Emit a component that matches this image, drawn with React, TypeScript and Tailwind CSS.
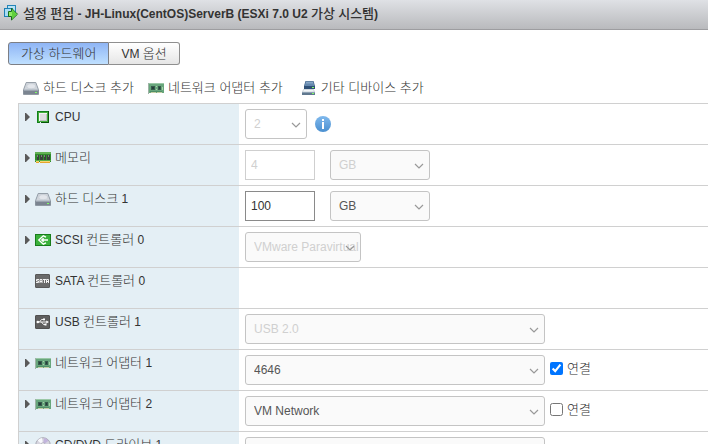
import { Fragment } from 'react';
import type { ReactNode } from 'react';

type MixedTextProps = {
    text: string;
    hangulClass?: string;
};

// Hangul is set one size larger than the latin text around it
const MixedText = ({ text, hangulClass = 'font-light' }: MixedTextProps) => (
    <>
        {text.split(/([가-힣]+)/).map((part, i) =>
            i % 2 ? (
                <span key={i} className={`text-[13px] ${hangulClass}`}>
                    {part}
                </span>
            ) : (
                <Fragment key={i}>{part}</Fragment>
            ),
        )}
    </>
);

type IconProps = {
    children: ReactNode;
};

const Icon = ({ children }: IconProps) => (
    <svg viewBox="0 0 16 16" className="size-4 shrink-0" aria-hidden="true">
        {children}
    </svg>
);

const EditIcon = () => (
    <Icon>
        <rect x="4.5" y="0.5" width="8" height="9" fill="#b9e2f5" stroke="#2484b8" />
        <rect x="1.5" y="3.5" width="8" height="8" fill="#a9dcf3" stroke="#1f7fb4" />
        <path d="M5.5 6.5h3V3.2l6 6-6 5.8v-3.5h-3z" fill="#8bea62" stroke="#176b1b" />
        <path d="M9 4.5l4.6 4.7L9 13.7z" fill="#5fd03c" />
    </Icon>
);

const DiskIcon = () => (
    <Icon>
        <path d="M3.2 2.5h9.6l2.7 7.2v4.8H.5V9.7z" fill="#b5bcc6" stroke="#87909b" strokeWidth="0.8" />
        <path d="M3.6 3h8.8l2.2 6.3H1.4z" fill="#d0d5db" />
        <ellipse cx="8.2" cy="6.2" rx="4.3" ry="2.5" fill="#e3e6eb" stroke="#c3c9d1" strokeWidth="0.6" />
        <path d="M.5 10h15v4.2H.5z" fill="#7b8490" />
        <path d="M1 10h14v1H1z" fill="#9ba4af" />
        <path d="M12 12h2v1h-2z" fill="#7dff63" />
    </Icon>
);

const NetworkIcon = () => (
    <Icon>
        <path d="M0 3h16v10H0z" fill="#68a67c" />
        <path d="M0 3h16v1H0z" fill="#9ac8a6" />
        <path d="M0 3h1v11H0z" fill="#9fb3a6" />
        <path d="M3 6h4v4H3zM10 6h3v4h-3z" fill="#375a4c" />
        <path d="M4 7h2v2H4zM11 7h1v2h-1z" fill="#25403a" />
        <path d="M8 6h1v1H8zM8 9h1v1H8zM14 7h1v3h-1z" fill="#a8d1a8" />
        <path d="M2 11h12v1H2z" fill="#4f8f68" />
        <path d="M3 12h5v1H3zM9 12h5v1H9z" fill="#c5cfa4" />
    </Icon>
);

const DeviceIcon = () => (
    <Icon>
        <path d="M4.5 1h8l1.5 5v3H3V6z" fill="#3e6389" />
        <path d="M5 1.5h7L13 6H4z" fill="#86a5c5" />
        <path d="M4 3.5h8.5L13 6H3.6z" fill="#6488ae" />
        <path d="M3 6h11v3H3z" fill="#2f5076" />
        <path d="M2.5 9.5h10l1 2.5h-12z" fill="#f2f5f8" stroke="#b4bfca" strokeWidth="0.6" />
        <path d="M1 12h13v3H1z" fill="#60788f" />
        <path d="M1 12h13v1H1z" fill="#8da0b2" />
        <path d="M11 7h2v1h-2zM11 13h2v1h-2z" fill="#7dff63" />
    </Icon>
);

const CpuIcon = () => (
    <Icon>
        <path d="M2 2h12v12H6v-1H5v1H2z" fill="#12801a" />
        <path d="M3 3h10v10H3z" fill="#43ac3b" />
        <path d="M13 2h1v12H6v-1h7z" fill="#075509" />
        <path d="M4 4h8v8H4z" fill="#f4f4f4" />
        <path d="M5 5h7v7H5z" fill="#bfbfc4" />
        <path d="M5 5h6v6H5z" fill="#dedee0" />
    </Icon>
);

const MemoryIcon = () => (
    <Icon>
        <path d="M0 2h16v10H0z" fill="#2f8b2c" />
        <path d="M0 2h16v2H0z" fill="#62b055" />
        <path d="M2 5h2v5H2zM5 5h3v5H5zM9 5h2v5H9zM12 5h3v5h-3z" fill="#3a403c" />
        <path d="M2 5h1v2H2zM6 5h1v2H6zM9 5h1v2H9zM13 5h1v2h-1z" fill="#78827a" />
        <path d="M0 10h16v1H0z" fill="#5cae45" />
        <path d="M1 11h3v2H1zM5 11h10v2H5z" fill="#e6a52c" />
        <path d="M1 11h3v1H1zM5 11h10v1H5z" fill="#f5d673" />
    </Icon>
);

const ScsiIcon = () => (
    <Icon>
        <rect x="0.5" y="2.5" width="15" height="11" fill="#3bb13b" stroke="#187d1c" />
        <path d="M11 5.2L8.3 3.8 3.8 8l4.5 4.2L11 10.8M8.6 6.2L6.8 8l1.8 1.8M7 8h6" fill="none" stroke="#fff" strokeWidth="1.4" />
    </Icon>
);

const SataIcon = () => (
    <Icon>
        <rect x="0.5" y="1.5" width="14" height="13" rx="0.5" fill="#6a6a6a" stroke="#585858" />
        <path
            d="M4 6.5H1.5V8H3.5V9.5H1M5 10V6.5H7V10M5 8.5H7M8 6.5H11M9.5 6.5V10M11.5 10V6.5H13.5V10M11.5 8.5H13.5"
            fill="none"
            stroke="#fff"
            strokeWidth="0.9"
        />
    </Icon>
);

const UsbIcon = () => (
    <Icon>
        <rect x="0.5" y="1.5" width="14" height="13" rx="0.5" fill="#5f5f5f" stroke="#505050" />
        <path d="M2 8h10M4.5 8l2-2.5h2M6.5 8l2 2.5h2" fill="none" stroke="#fff" strokeWidth="0.9" />
        <circle cx="2.8" cy="8" r="1.3" fill="#fff" />
        <circle cx="9" cy="5.4" r="1.1" fill="#fff" />
        <path d="M9.5 9.5h2v2h-2zM11.3 6.4L14 8l-2.7 1.6z" fill="#fff" />
    </Icon>
);

const DiscIcon = () => (
    <Icon>
        <circle cx="8" cy="8" r="7.3" fill="#d6d5df" stroke="#9c9ba6" strokeWidth="0.8" />
        <path d="M8 8L2.5 3.6A7 7 0 0 1 7 1.1z" fill="#f8f8fc" />
        <path d="M8 8l1-6.9a7 7 0 0 1 4.5 2.6z" fill="#c2b4dc" />
        <path d="M8 8l6.9 1a7 7 0 0 1-3.2 4.9z" fill="#b6cfe4" />
        <circle cx="8" cy="8" r="2.2" fill="#fff" stroke="#a3a2b0" strokeWidth="0.8" />
    </Icon>
);

const InfoIcon = () => (
    <svg viewBox="0 0 16 16" className="size-4">
        <defs>
            <linearGradient id="info" x1="0" y1="0" x2="0" y2="1">
                <stop offset="0" stopColor="#80b9ed" />
                <stop offset="1" stopColor="#4a8fd0" />
            </linearGradient>
        </defs>
        <circle cx="8" cy="8" r="8" fill="url(#info)" />
        <path d="M7 3h2v2H7zM7 6h2v7H7z" fill="#fff" />
    </svg>
);

type SelectProps = {
    label: string;
    value: string;
    width: string;
    background?: string;
    disabled?: boolean;
};

const Select = ({ label, value, width, background = 'bg-[#fafafa]', disabled }: SelectProps) => (
    <div className={`relative h-[30px] ${width}`}>
        <select
            aria-label={label}
            disabled={disabled}
            className={`size-full appearance-none rounded-[3px] border border-[#c4c4c4] pl-2 text-xs text-[#565656] opacity-100 disabled:text-[#d0d0d0] ${background}`}
        >
            <option>{value}</option>
        </select>
        <svg
            viewBox="0 0 10 6"
            className="pointer-events-none absolute top-[13px] right-1.5 h-1.5 w-2.5"
            aria-hidden="true"
        >
            <path d="M1 1l4 4 4-4" fill="none" stroke="#999" strokeWidth="1.2" />
        </svg>
    </div>
);

type SizeFieldProps = {
    label: string;
    value: string;
    disabled?: boolean;
};

const SizeField = ({ label, value, disabled }: SizeFieldProps) => (
    <div className="flex gap-[15px]">
        <input
            type="text"
            aria-label={label}
            defaultValue={value}
            disabled={disabled}
            className="h-[30px] w-[70px] border border-[#8a8a8a] bg-white px-[5px] text-xs text-[#333] disabled:border-[#cfcfcf] disabled:text-[#d0d0d0]"
        />
        <Select label={`${label} 단위`} value="GB" width="w-[100px]" disabled={disabled} />
    </div>
);

type NetworkFieldProps = {
    label: string;
    value: string;
    connected?: boolean;
};

const NetworkField = ({ label, value, connected }: NetworkFieldProps) => (
    <div className="flex items-center gap-[5px]">
        <Select label={label} value={value} width="w-[300px]" />
        <label className="flex items-center gap-1 pb-0.5 text-[13px] font-light">
            <input type="checkbox" defaultChecked={connected} className="size-[13px]" />
            연결
        </label>
    </div>
);

const rows = [
    {
        name: 'CPU',
        icon: <CpuIcon />,
        expandable: true,
        field: (
            <div className="flex items-center gap-2">
                <Select label="CPU" value="2" width="w-[62px]" background="bg-white" disabled />
                <button type="button" aria-label="정보">
                    <InfoIcon />
                </button>
            </div>
        ),
    },
    {
        name: '메모리',
        icon: <MemoryIcon />,
        expandable: true,
        field: <SizeField label="메모리" value="4" disabled />,
    },
    {
        name: '하드 디스크 1',
        icon: <DiskIcon />,
        expandable: true,
        field: <SizeField label="하드 디스크 1" value="100" />,
    },
    {
        name: 'SCSI 컨트롤러 0',
        icon: <ScsiIcon />,
        expandable: true,
        field: <Select label="SCSI 컨트롤러 0" value="VMware Paravirtual" width="w-[116px]" disabled />,
    },
    {
        name: 'SATA 컨트롤러 0',
        icon: <SataIcon />,
        field: null,
    },
    {
        name: 'USB 컨트롤러 1',
        icon: <UsbIcon />,
        field: <Select label="USB 컨트롤러 1" value="USB 2.0" width="w-[300px]" disabled />,
    },
    {
        name: '네트워크 어댑터 1',
        icon: <NetworkIcon />,
        expandable: true,
        field: <NetworkField label="네트워크 어댑터 1" value="4646" connected />,
    },
    {
        name: '네트워크 어댑터 2',
        icon: <NetworkIcon />,
        expandable: true,
        field: <NetworkField label="네트워크 어댑터 2" value="VM Network" />,
    },
    {
        name: 'CD/DVD 드라이브 1',
        icon: <DiscIcon />,
        expandable: true,
        field: <Select label="CD/DVD 드라이브 1" value="" width="w-[300px]" />,
    },
];

const App = () => (
    <div className="h-screen overflow-hidden bg-white font-['Liberation_Sans','Noto_Sans_CJK_KR',sans-serif] text-xs text-[#333]">
        <header className="flex h-[30px] items-center gap-1 border-b border-[#9d9da0] bg-linear-to-b from-[#dfe1e5] to-[#b9babd] pb-1 pl-[3px]">
            <EditIcon />
            <h1 className="pt-0.5 font-bold whitespace-nowrap">
                <MixedText
                    text="설정 편집 - JH-Linux(CentOS)ServerB (ESXi 7.0 U2 가상 시스템)"
                    hangulClass="font-medium"
                />
            </h1>
        </header>

        <div className="flex px-2 pt-3" role="tablist">
            <button
                type="button"
                role="tab"
                aria-selected="true"
                className="h-[23px] rounded-l-[3px] border border-[#7d7f85] bg-linear-to-b from-[#8fb5f5] to-[#bfe0ff] px-3 text-[13px] leading-5 font-light"
            >
                가상 하드웨어
            </button>
            <button
                type="button"
                role="tab"
                aria-selected="false"
                className="h-[23px] rounded-r-[3px] border border-l-0 border-[#8f8f8f] bg-linear-to-b from-white to-[#e6e6e6] px-3 leading-5"
            >
                <MixedText text="VM 옵션" />
            </button>
        </div>

        <div className="flex h-[38px] items-center gap-3.5 pt-2 pl-[23px] text-[13px] font-light whitespace-nowrap">
            <button type="button" className="flex items-center gap-1">
                <DiskIcon />
                하드 디스크 추가
            </button>
            <button type="button" className="flex items-center gap-1">
                <NetworkIcon />
                네트워크 어댑터 추가
            </button>
            <button type="button" className="flex items-center gap-1 pl-1">
                <DeviceIcon />
                기타 디바이스 추가
            </button>
        </div>

        <div className="pl-[18px]">
            <table className="w-full border-separate border-spacing-0 border-l border-[#d0d0d0]">
                <tbody>
                    {rows.map((row) => (
                        <tr key={row.name}>
                            <th
                                scope="row"
                                className="w-[220px] border-t border-[#d0d0d0] bg-[#e4eff5] pt-[5px] pl-1.5 text-left align-top font-normal"
                            >
                                <div className="flex h-4 items-center gap-1 whitespace-nowrap">
                                    <div className="flex w-1.5 shrink-0">
                                        {row.expandable && (
                                            <button type="button" aria-label={`${row.name} 펼치기`}>
                                                <svg viewBox="0 0 5 8" className="h-2 w-[5px]">
                                                    <path d="M0 0h1l4 4-4 4H0z" fill="#5a5a5a" />
                                                </svg>
                                            </button>
                                        )}
                                    </div>
                                    {row.icon}
                                    <span>
                                        <MixedText text={row.name} />
                                    </span>
                                </div>
                            </th>
                            <td className="h-[41px] border-t border-[#d0d0d0] py-[5px] pl-1.5">{row.field}</td>
                        </tr>
                    ))}
                </tbody>
            </table>
        </div>
    </div>
);

export default App;
